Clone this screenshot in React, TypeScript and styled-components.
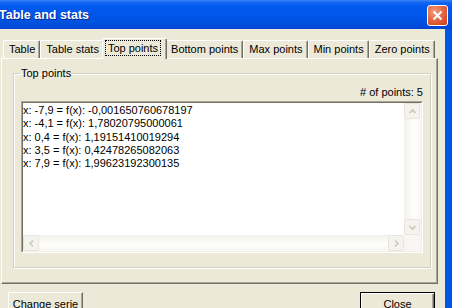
import styled, { createGlobalStyle } from 'styled-components';

const GlobalStyle = createGlobalStyle`
  html, body {
    margin: 0;
    padding: 0;
    background: #ECE9D8;
  }
  body {
    font-family: 'Liberation Sans', Arial, sans-serif;
    font-size: 11px;
    color: #000;
  }
`;

const Window = styled.div`
  width: 452px;
  height: 308px;
  overflow: hidden;
  display: flex;
  flex-direction: column;
  background: linear-gradient(to right, #0843C8 0, #0843C8 1px, #0058EE 1px, #0055E5 100%);
`;

const TitleBar = styled.div`
  height: 29px;
  flex: none;
  display: flex;
  align-items: center;
  justify-content: space-between;
  padding-right: 4px;
  background: linear-gradient(
    to bottom,
    #3B86F5 0%,
    #1467F0 8%,
    #0058EE 22%,
    #0056E8 55%,
    #0050DF 80%,
    #0045D2 100%
  );
`;

const Title = styled.span`
  color: #fff;
  font: bold 12.5px 'Liberation Sans', Arial, sans-serif;
  text-shadow: 1px 1px #0A2A8A;
  margin-left: -1px;
  padding-top: 1px;
`;

const CloseBox = styled.div`
  width: 21px;
  height: 21px;
  margin-top: 2px;
  box-sizing: border-box;
  border: 1px solid #fff;
  border-radius: 3px;
  background: radial-gradient(circle at 35% 30%, #F29C7E 0%, #E2603A 55%, #C5401B 100%);
  display: flex;
  align-items: center;
  justify-content: center;
`;

const Body = styled.div`
  flex: 1;
  display: flex;
`;

const Client = styled.div`
  width: 445px;
  flex: none;
  background: #ECE9D8;
  box-shadow: 1px 0 0 #2A4FB0;
  padding: 9px 0 0 1px;
  box-sizing: border-box;
  display: flex;
  flex-direction: column;
`;

const TabStrip = styled.div`
  display: flex;
  align-items: flex-end;
  height: 21px;
  padding-left: 2px;
  margin-bottom: -1px;
  position: relative;
  z-index: 1;
`;

const Tab = styled.div<{ $active?: boolean }>`
  box-sizing: border-box;
  background: #ECE9D8;
  border-top: 1px solid #fff;
  border-left: 1px solid #fff;
  border-right: 1px solid #716F64;
  border-radius: 2px 2px 0 0;
  box-shadow: inset -1px 0 0 #ACA899;
  white-space: nowrap;
  height: ${(p) => (p.$active ? '21px' : '18px')};
  margin: ${(p) => (p.$active ? '0 -2px' : '0 0 1px 0')};
  padding: ${(p) => (p.$active ? '1px 5px 0 2px' : '0 4px 0 5px')};
  line-height: 16px;
  position: relative;
  z-index: ${(p) => (p.$active ? 2 : 1)};
`;

const FocusRing = styled.span`
  display: inline-block;
  border: 1px dotted #000;
  padding: 0 2px;
  line-height: 14px;
`;

const Panel = styled.div`
  width: 437px;
  height: 226px;
  flex: none;
  box-sizing: border-box;
  border: 1px solid;
  border-color: #fff #716F64 #716F64 #fff;
  box-shadow: inset -1px -1px 0 #ACA899;
  padding: 8px 6px 0 11px;
`;

const Group = styled.fieldset`
  margin: 0;
  width: 418px;
  box-sizing: border-box;
  border: 1px solid #D0D0BF;
  box-shadow: inset 1px 1px 0 #fff, 1px 1px 0 #fff;
  padding: 0 7px 14px 7px;
`;

const Legend = styled.legend`
  padding: 0 1px;
  margin-left: -1px;
  line-height: 13px;
`;

const CountRow = styled.div`
  margin-top: 6px;
  line-height: 13px;
  text-align: right;
`;

const Sunken = styled.div`
  margin-top: 2px;
  height: 152px;
  box-sizing: border-box;
  border: 1px solid;
  border-color: #ACA899 #fff #fff #ACA899;
`;

const ListGrid = styled.div`
  height: 100%;
  box-sizing: border-box;
  border: 1px solid;
  border-color: #716F64 #F1EFE2 #F1EFE2 #716F64;
  display: grid;
  grid-template-columns: 1fr 17px;
  grid-template-rows: 1fr 16px;
  background: #fff;
`;

const ListItems = styled.div`
  padding-top: 1px;
  line-height: 13.3px;
  white-space: nowrap;
  overflow: hidden;
`;

const ScrollBar = styled.div<{ $vertical?: boolean }>`
  display: flex;
  flex-direction: ${(p) => (p.$vertical ? 'column' : 'row')};
  justify-content: space-between;
  background: ${(p) =>
    p.$vertical
      ? 'linear-gradient(to right, #F3F1EC, #FEFEFB 60%, #F7F6F1)'
      : 'linear-gradient(to bottom, #F3F1EC, #FEFEFB 60%, #F7F6F1)'};
`;

const ScrollButton = styled.div`
  width: 16px;
  height: 16px;
  flex: none;
  box-sizing: border-box;
  border: 1px solid #E8E6DC;
  border-radius: 2px;
  background: #F4F3EE;
  display: flex;
  align-items: center;
  justify-content: center;
`;

const Corner = styled.div`
  background: #F7F6F2;
`;

const ButtonRow = styled.div`
  display: flex;
  justify-content: space-between;
  padding: 8px 10px 0 7px;
`;

const Button = styled.div<{ $default?: boolean }>`
  width: 75px;
  height: 23px;
  box-sizing: border-box;
  background: #ECE9D8;
  border: 1px solid;
  border-color: ${(p) => (p.$default ? '#000' : '#fff #716F64 #716F64 #fff')};
  box-shadow: ${(p) =>
    p.$default
      ? 'inset 1px 1px 0 #fff, inset -1px -1px 0 #716F64, inset -2px -2px 0 #ACA899'
      : 'inset -1px -1px 0 #ACA899'};
  display: flex;
  align-items: center;
  justify-content: center;
  padding-top: 1px;
`;

const points = [
  'x: -7,9 = f(x): -0,001650760678197',
  'x: -4,1 = f(x): 1,78020795000061',
  'x: 0,4 = f(x): 1,19151410019294',
  'x: 3,5 = f(x): 0,42478265082063',
  'x: 7,9 = f(x): 1,99623192300135',
];

const tabs = ['Table', 'Table stats', 'Top points', 'Bottom points', 'Max points', 'Min points', 'Zero points'];

function Chevron({ dir }: { dir: 'up' | 'down' | 'left' | 'right' }) {
  const rot = { up: 0, right: 90, down: 180, left: 270 }[dir];
  return (
    <svg width="9" height="9" viewBox="0 0 9 9">
      <polyline
        points="1.5,6 4.5,3 7.5,6"
        fill="none"
        stroke="#C9C7BA"
        strokeWidth="1.6"
        transform={`rotate(${rot} 4.5 4.5)`}
      />
    </svg>
  );
}

export default function App() {
  return (
    <>
      <GlobalStyle />
      <Window>
        <TitleBar>
          <Title>Table and stats</Title>
          <CloseBox>
            <svg width="11" height="11" viewBox="0 0 11 11">
              <path d="M1.5 1.5 L9.5 9.5 M9.5 1.5 L1.5 9.5" stroke="#fff" strokeWidth="2" />
            </svg>
          </CloseBox>
        </TitleBar>
        <Body>
          <Client>
            <TabStrip>
              {tabs.map((t) =>
                t === 'Top points' ? (
                  <Tab key={t} $active>
                    <FocusRing>{t}</FocusRing>
                  </Tab>
                ) : (
                  <Tab key={t}>{t}</Tab>
                )
              )}
            </TabStrip>
            <Panel>
              <Group>
                <Legend>Top points</Legend>
                <CountRow># of points: 5</CountRow>
                <Sunken>
                  <ListGrid>
                    <ListItems>
                      {points.map((p) => (
                        <div key={p}>{p}</div>
                      ))}
                    </ListItems>
                    <ScrollBar $vertical>
                      <ScrollButton>
                        <Chevron dir="up" />
                      </ScrollButton>
                      <ScrollButton>
                        <Chevron dir="down" />
                      </ScrollButton>
                    </ScrollBar>
                    <ScrollBar>
                      <ScrollButton>
                        <Chevron dir="left" />
                      </ScrollButton>
                      <ScrollButton>
                        <Chevron dir="right" />
                      </ScrollButton>
                    </ScrollBar>
                    <Corner />
                  </ListGrid>
                </Sunken>
              </Group>
            </Panel>
            <ButtonRow>
              <Button>Change serie</Button>
              <Button $default>Close</Button>
            </ButtonRow>
          </Client>
        </Body>
      </Window>
    </>
  );
}
